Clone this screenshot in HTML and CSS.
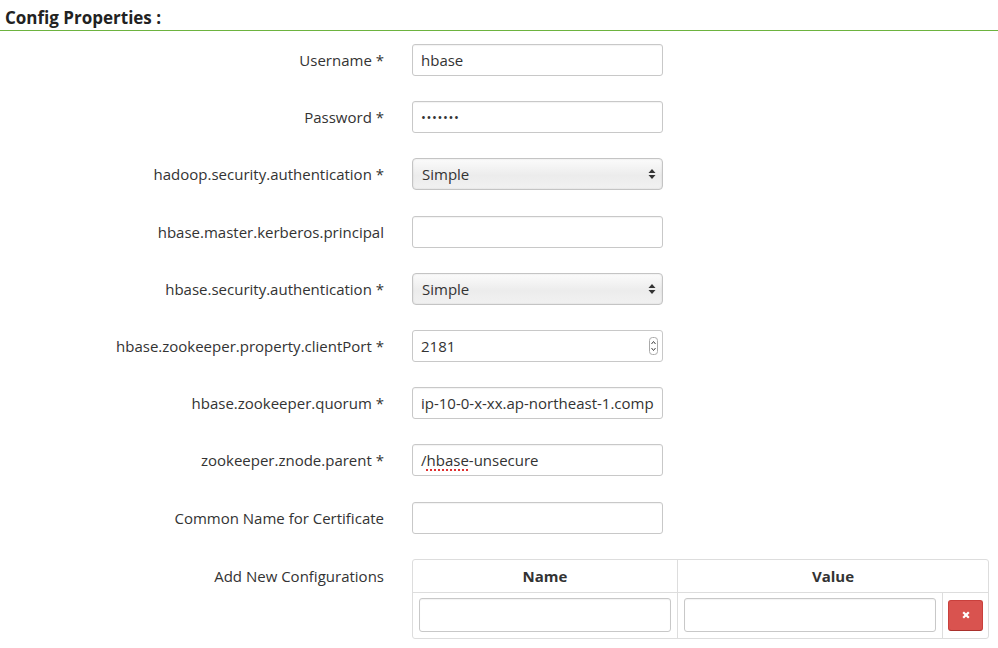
FILE: index.html
```html
<!DOCTYPE html>
<html>
<head>
<meta charset="utf-8">
<link rel="stylesheet" href="styles.css">
</head>
<body>
<div class="page">
  <h3 class="title">Config Properties :</h3>
  <div class="form">
    <div class="row"><label class="lbl">Username *</label><div class="ctl"><input class="inp" type="text" value="hbase"></div></div>
    <div class="row"><label class="lbl">Password *</label><div class="ctl"><input class="inp pw" type="password" value="1234567"></div></div>
    <div class="row"><label class="lbl">hadoop.security.authentication *</label><div class="ctl"><div class="sel"><span>Simple</span><svg class="arr" width="8" height="12" viewBox="0 0 8 12"><path d="M4 1 L7.5 5 L0.5 5 Z M4 11 L7.5 7 L0.5 7 Z" fill="#333"/></svg></div></div></div>
    <div class="row"><label class="lbl">hbase.master.kerberos.principal</label><div class="ctl"><input class="inp" type="text" value=""></div></div>
    <div class="row"><label class="lbl">hbase.security.authentication *</label><div class="ctl"><div class="sel"><span>Simple</span><svg class="arr" width="8" height="12" viewBox="0 0 8 12"><path d="M4 1 L7.5 5 L0.5 5 Z M4 11 L7.5 7 L0.5 7 Z" fill="#333"/></svg></div></div></div>
    <div class="row"><label class="lbl">hbase.zookeeper.property.clientPort *</label><div class="ctl"><div class="num"><span>2181</span><span class="spin"><svg width="9" height="18" viewBox="0 0 9 18"><rect x="0.5" y="0.5" width="8" height="17" rx="3" fill="#fff" stroke="#aaa"/><path d="M2.5 7 L4.5 4.5 L6.5 7 M2.5 11 L4.5 13.5 L6.5 11" fill="none" stroke="#444" stroke-width="1"/></svg></span></div></div></div>
    <div class="row"><label class="lbl">hbase.zookeeper.quorum *</label><div class="ctl"><input class="inp" type="text" value="ip-10-0-x-xx.ap-northeast-1.compute.internal"></div></div>
    <div class="row"><label class="lbl">zookeeper.znode.parent *</label><div class="ctl"><div class="inp clip">/<span class="spell">hbase</span>-unsecure</div></div></div>
    <div class="row"><label class="lbl">Common Name for Certificate</label><div class="ctl"><input class="inp" type="text" value=""></div></div>
    <div class="row top"><label class="lbl">Add New Configurations</label>
      <div class="ctl">
        <table class="cfg">
          <thead><tr><th class="cn">Name</th><th class="cv" colspan="2">Value</th></tr></thead>
          <tbody><tr><td class="cn"><div class="inp small"></div></td><td class="cv2"><div class="inp small"></div></td><td class="cd"><span class="del"><svg width="8" height="8" viewBox="0 0 8 8"><path d="M1.2 1.2 L6.8 6.8 M6.8 1.2 L1.2 6.8" stroke="#fff" stroke-width="2.2"/></svg></span></td></tr></tbody>
        </table>
      </div>
    </div>
  </div>
</div>
</body>
</html>
```
FILE: styles.css
```css
* { box-sizing: border-box; }
html, body { margin: 0; padding: 0; background: #fff; }
body { font-family: "Open Sans", "Liberation Sans", sans-serif; color: #333; }
.page { width: 998px; }
.title {
  margin: 0;
  font-size: 17px;
  font-weight: 700;
  color: #222;
  padding: 6px 0 0 5px;
  height: 31px;
  border-bottom: 1px solid #6db33f;
}
.form { padding-top: 13px; }
.row { display: flex; align-items: center; height: 57.2px; padding-bottom: 25px; }
.row.top { align-items: flex-start; height: auto; padding-bottom: 0; }
.row.top .lbl { padding-top: 7px; }
.lbl {
  width: 384px;
  text-align: right;
  font-size: 15px;
  color: #333;
}
.ctl { margin-left: 28px; }
.inp {
  display: block;
  width: 251px;
  height: 32px;
  border: 1px solid #c8c8c8;
  border-radius: 3px;
  padding: 0 8px;
  font-family: "Open Sans", "Liberation Sans", sans-serif;
  font-size: 15px;
  color: #333;
  background: #fff;
  line-height: 30px;
  box-shadow: inset 0 1px 1px rgba(0,0,0,0.05);
  outline: none;
}
.pw { letter-spacing: 0.6px; font-size: 13px; }
.clip { white-space: nowrap; overflow: hidden; }
.spell { text-decoration: underline dotted #e03030; text-decoration-thickness: 2px; text-underline-offset: 3px; }
.sel {
  width: 251px;
  height: 32px;
  border: 1px solid #c4c4c4;
  border-radius: 4px;
  background: linear-gradient(#fbfbfb, #ececec 55%, #f1f1f1);
  box-shadow: inset 0 0 2px rgba(0,0,0,0.12);
  display: flex;
  align-items: center;
  justify-content: space-between;
  padding: 0 6px 0 9px;
  font-size: 15px;
  color: #333;
}
.arr { display: block; }
.num {
  width: 251px;
  height: 32px;
  border: 1px solid #c8c8c8;
  border-radius: 3px;
  display: flex;
  align-items: center;
  justify-content: space-between;
  padding: 0 4px 0 8px;
  font-size: 15px;
}
.spin svg { display: block; }
.cfg {
  width: 576px;
  border-collapse: separate;
  border-spacing: 0;
  border: 1px solid #ddd;
  border-radius: 3px;
}
.cfg th {
  height: 33px;
  font-size: 15px;
  font-weight: 700;
  color: #333;
  text-align: center;
  border-bottom: 1px solid #ddd;
  padding: 0;
}
.cfg th.cn { width: 264px; border-right: 1px solid #ddd; }
.cfg td { padding: 5px 6px 5px 6px; height: 45px; vertical-align: middle; }
.cfg td.cn { border-right: 1px solid #ddd; }
.cfg td.cv2 { border-right: 1px solid #ddd; width: 264px; }
.cfg td.cd { padding: 0 5px 0 5px; }
.inp.small { width: 252px; height: 34px; }
.del {
  display: flex;
  align-items: center;
  justify-content: center;
  width: 35px;
  height: 31px;
  border-radius: 3px;
  background: #d9534f;
  border: 1px solid #c9403c;
  border-bottom-color: #a9302c;
}
.del svg { display: block; }
```
